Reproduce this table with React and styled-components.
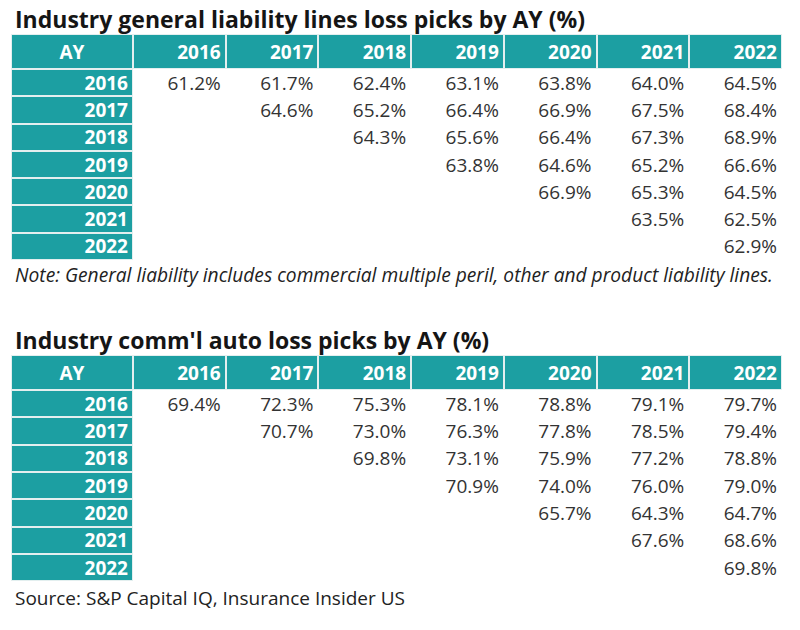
import React from "react";
import styled, { createGlobalStyle } from "styled-components";

const GlobalStyle = createGlobalStyle`
  body {
    margin: 0;
    background: #ffffff;
    font-family: "Open Sans", "Liberation Sans", sans-serif;
  }
`;

const YEARS = ["2016", "2017", "2018", "2019", "2020", "2021", "2022"];

const GL_ROWS = [
  ["61.2%", "61.7%", "62.4%", "63.1%", "63.8%", "64.0%", "64.5%"],
  ["", "64.6%", "65.2%", "66.4%", "66.9%", "67.5%", "68.4%"],
  ["", "", "64.3%", "65.6%", "66.4%", "67.3%", "68.9%"],
  ["", "", "", "63.8%", "64.6%", "65.2%", "66.6%"],
  ["", "", "", "", "66.9%", "65.3%", "64.5%"],
  ["", "", "", "", "", "63.5%", "62.5%"],
  ["", "", "", "", "", "", "62.9%"],
];

const AUTO_ROWS = [
  ["69.4%", "72.3%", "75.3%", "78.1%", "78.8%", "79.1%", "79.7%"],
  ["", "70.7%", "73.0%", "76.3%", "77.8%", "78.5%", "79.4%"],
  ["", "", "69.8%", "73.1%", "75.9%", "77.2%", "78.8%"],
  ["", "", "", "70.9%", "74.0%", "76.0%", "79.0%"],
  ["", "", "", "", "65.7%", "64.3%", "64.7%"],
  ["", "", "", "", "", "67.6%", "68.6%"],
  ["", "", "", "", "", "", "69.8%"],
];

const Page = styled.div`
  width: 800px;
  padding: 5px 0 0 12px;
  box-sizing: border-box;
`;

const Title = styled.h2`
  margin: 0 0 2px 3px;
  font-size: 23px;
  line-height: 28px;
  font-weight: 700;
  color: #151515;
`;

const Grid = styled.div`
  display: grid;
  width: 769px;
  grid-template-columns: 120px repeat(7, 1fr);
  grid-template-rows: 33px repeat(7, 25.3px);
  gap: 2px 2px;
`;

const HeadCell = styled.div`
  background: #1c9fa2;
  color: #ffffff;
  font-weight: 700;
  font-size: 19px;
  display: flex;
  align-items: center;
  justify-content: ${(p) => (p.$center ? "center" : "flex-end")};
  padding-right: ${(p) => (p.$center ? "0" : "4px")};
  box-shadow: 0 0 0 1px #e3efef;
`;

const RowHead = styled(HeadCell)`
  padding-right: 4px;
`;

const Value = styled.div`
  font-size: 19px;
  color: #333333;
  display: flex;
  align-items: center;
  justify-content: flex-end;
  padding-right: 4px;
`;

const Note = styled.p`
  margin: 3px 0 0 3px;
  font-size: 19.2px;
  line-height: 26px;
  font-style: italic;
  color: #222222;
`;

const Source = styled.p`
  margin: 5px 0 0 3px;
  font-size: 19px;
  line-height: 26px;
  color: #222222;
`;

const Spacer = styled.div`
  height: ${(p) => p.$h}px;
`;

function LossTable({ rows }) {
  return (
    <Grid>
      <HeadCell $center>AY</HeadCell>
      {YEARS.map((y) => (
        <HeadCell key={y}>{y}</HeadCell>
      ))}
      {rows.map((row, i) => (
        <React.Fragment key={YEARS[i]}>
          <RowHead>{YEARS[i]}</RowHead>
          {row.map((v, j) => (
            <Value key={j}>{v}</Value>
          ))}
        </React.Fragment>
      ))}
    </Grid>
  );
}

export default function App() {
  return (
    <Page>
      <GlobalStyle />
      <Title>Industry general liability lines loss picks by AY (%)</Title>
      <LossTable rows={GL_ROWS} />
      <Note>
        Note: General liability includes commercial multiple peril, other and
        product liability lines.
      </Note>
      <Spacer $h={38} />
      <Title>Industry comm'l auto loss picks by AY (%)</Title>
      <LossTable rows={AUTO_ROWS} />
      <Source>Source: S&amp;P Capital IQ, Insurance Insider US</Source>
    </Page>
  );
}
